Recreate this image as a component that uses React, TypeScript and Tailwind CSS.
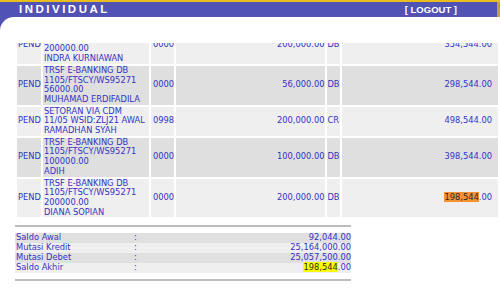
import React from 'react';

type Mutasi = {
  status: string;
  desc: string[];
  branch: string;
  amount: string;
  type: string;
  balance: string;
  mark?: boolean;
};

const rows: Mutasi[] = [
  {
    status: 'PEND',
    desc: ['TRSF E-BANKING DB', '1105/FTSCY/WS95271', '200000.00', 'INDRA KURNIAWAN'],
    branch: '0000',
    amount: '200,000.00',
    type: 'DB',
    balance: '354,544.00',
  },
  {
    status: 'PEND',
    desc: ['TRSF E-BANKING DB', '1105/FTSCY/WS95271', '56000.00', 'MUHAMAD ERDIFADILA'],
    branch: '0000',
    amount: '56,000.00',
    type: 'DB',
    balance: '298,544.00',
  },
  {
    status: 'PEND',
    desc: ['SETORAN VIA CDM', '11/05 WSID:ZLJ21 AWAL', 'RAMADHAN SYAH'],
    branch: '0998',
    amount: '200,000.00',
    type: 'CR',
    balance: '498,544.00',
  },
  {
    status: 'PEND',
    desc: ['TRSF E-BANKING DB', '1105/FTSCY/WS95271', '100000.00', 'ADIH'],
    branch: '0000',
    amount: '100,000.00',
    type: 'DB',
    balance: '398,544.00',
  },
  {
    status: 'PEND',
    desc: ['TRSF E-BANKING DB', '1105/FTSCY/WS95271', '200000.00', 'DIANA SOPIAN'],
    branch: '0000',
    amount: '200,000.00',
    type: 'DB',
    balance: '198,544.00',
    mark: true,
  },
];

const summary = [
  { label: 'Saldo Awal', value: '92,044.00' },
  { label: 'Mutasi Kredit', value: '25,164,000.00' },
  { label: 'Mutasi Debet', value: '25,057,500.00' },
  { label: 'Saldo Akhir', value: '198,544.00', mark: true },
];

export default function App() {
  return (
    <div className="w-[500px] h-[296px] overflow-hidden bg-[#5052b4] font-['DejaVu_Sans',Verdana,sans-serif]">
      {/* top bar */}
      <div className="h-[2px] bg-[#e9bd1c]" />
      <div className="h-[15px] flex items-center justify-between pl-[19px] pr-[40px] pt-[1px] border-r-[3px] border-[#b9a437] font-['Liberation_Sans',Arial,sans-serif] font-bold text-white">
        <span className="text-[11.5px] tracking-[2.5px] leading-none">INDIVIDUAL</span>
        <span className="text-[9.5px] leading-none">[ LOGOUT ]</span>
      </div>

      <div className="bg-white rounded-tl-[14px] h-[279px] text-[8.3px] text-[#3333c4]">
        <div className="h-[26px]" />

        {/* transaction list, scrolled */}
        <div className="overflow-hidden">
          <table className="-mt-[20px] ml-[15px] table-fixed border-separate border-spacing-[2px] leading-[9.7px]">
            <colgroup>
              <col className="w-[24px]" />
              <col className="w-[106px]" />
              <col className="w-[23px]" />
              <col className="w-[151px]" />
              <col className="w-[10px]" />
              <col className="w-[158px]" />
            </colgroup>
            <tbody>
              {rows.map((r, i) => {
                const bg = i % 2 === 0 ? 'bg-[#efefef]' : 'bg-[#dfdfdf]';
                return (
                  <tr key={i}>
                    <td className={`${bg} p-0 pl-[1px] align-middle whitespace-nowrap`}>{r.status}</td>
                    <td className={`${bg} p-0 pl-[1px] align-middle whitespace-nowrap`}>
                      {r.desc.map((d) => (
                        <div key={d}>{d}</div>
                      ))}
                    </td>
                    <td className={`${bg} p-0 pl-[2px] align-middle whitespace-nowrap`}>{r.branch}</td>
                    <td className={`${bg} p-0 pr-[1px] text-right align-middle whitespace-nowrap`}>{r.amount}</td>
                    <td className={`${bg} p-0 align-middle whitespace-nowrap`}>{r.type}</td>
                    <td className={`${bg} p-0 pr-[6px] text-right align-middle whitespace-nowrap`}>
                      {r.mark ? (
                        <>
                          <span className="bg-[#f7922e] text-[#2a2a2a]">{r.balance.slice(0, 7)}</span>
                          {r.balance.slice(7)}
                        </>
                      ) : (
                        r.balance
                      )}
                    </td>
                  </tr>
                );
              })}
            </tbody>
          </table>
        </div>

        {/* summary */}
        <div className="ml-[15px] w-[336px] mt-[6px]">
          <div className="h-[2px] bg-[#bdbdbd]" />
          <div className="mt-[6px] leading-[9.85px]">
            {summary.map((s, i) => (
              <div
                key={s.label}
                className={`flex pl-[1px] ${i % 2 === 0 ? 'bg-[#e0e0e0]' : 'bg-[#efefef]'}`}
              >
                <span className="w-[118px]">{s.label}</span>
                <span className="w-[10px]">:</span>
                <span className="flex-1 text-right">
                  {s.mark ? (
                    <>
                      <span className="bg-[#ffff00] text-[#2a2a2a]">{s.value.slice(0, 7)}</span>
                      {s.value.slice(7)}
                    </>
                  ) : (
                    s.value
                  )}
                </span>
              </div>
            ))}
          </div>
          <div className="mt-[6px] h-[2px] bg-[#bdbdbd]" />
        </div>
      </div>
    </div>
  );
}
